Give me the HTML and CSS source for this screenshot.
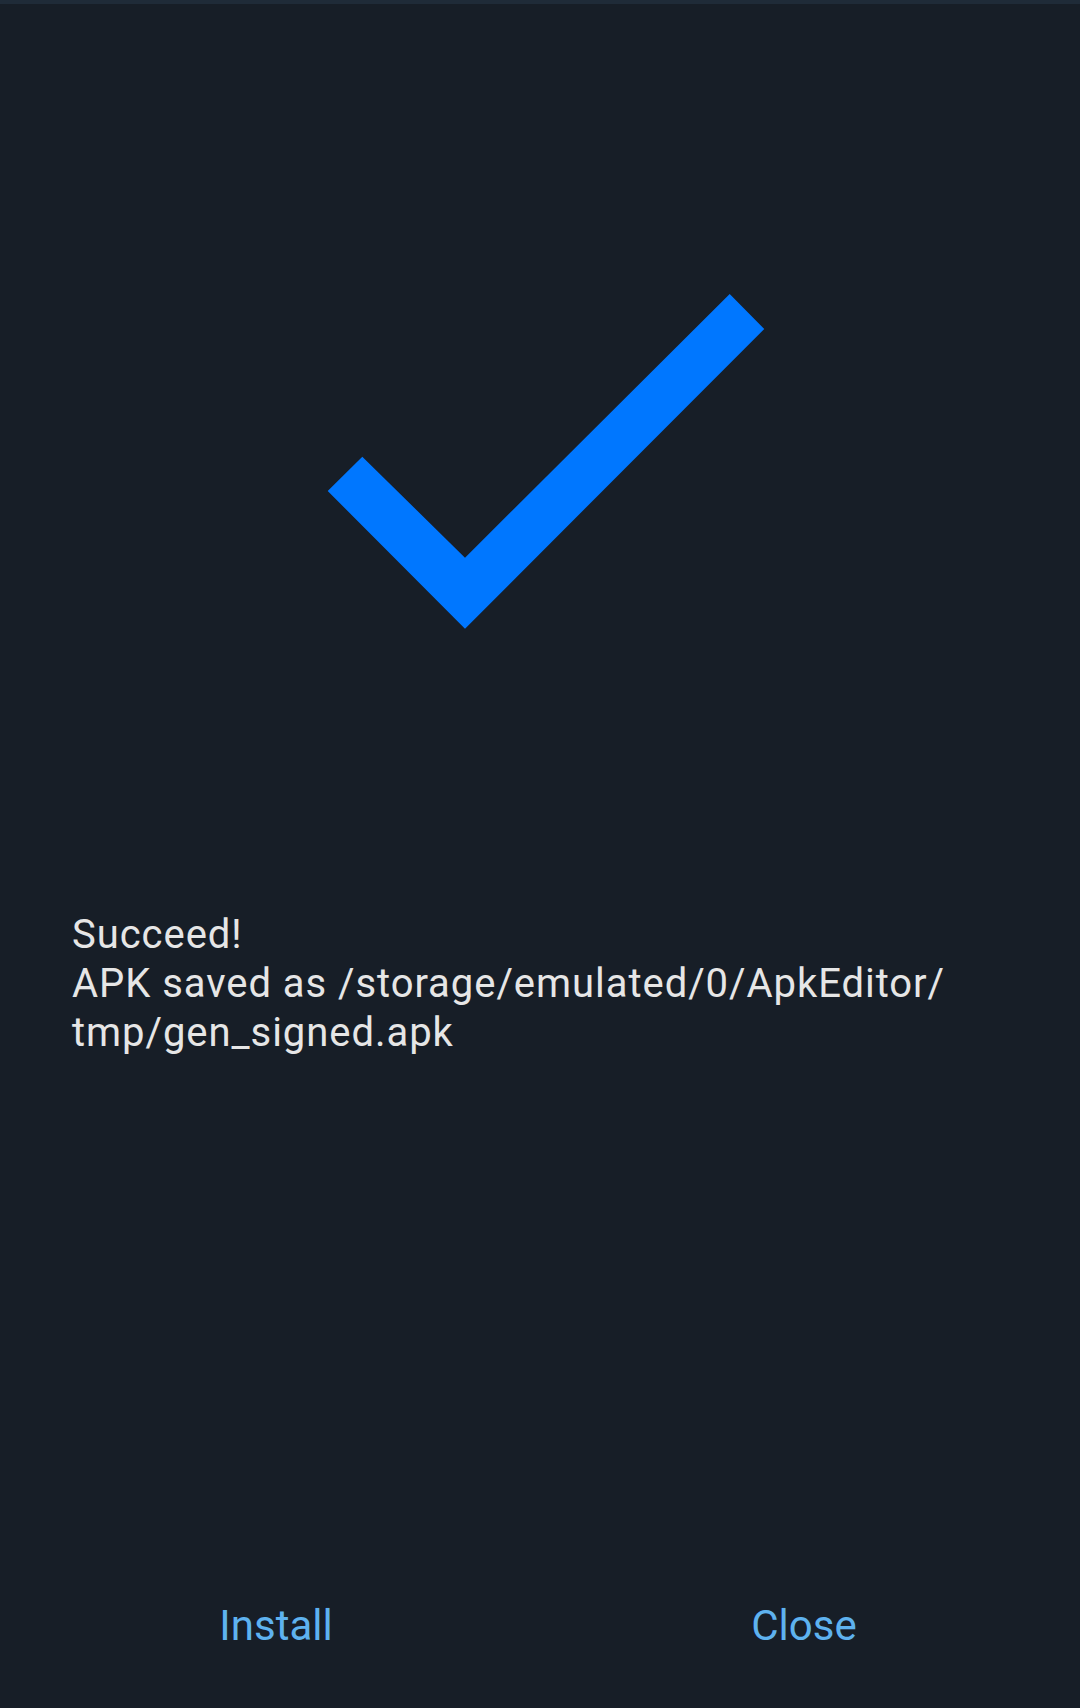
FILE: index.html
```html
<!DOCTYPE html>
<html>
<head>
<meta charset="utf-8">
<link rel="stylesheet" href="styles.css">
</head>
<body>
<div class="page">
  <div class="topbar"></div>
  <div class="hero">
    <svg class="check" width="1080" height="400" viewBox="0 260 1080 400">
      <polygon points="327.7,491 362.3,456.7 465,557.7 729.7,294 764.3,329 465,628.7" fill="#0077ff"/>
    </svg>
  </div>
  <div class="message">Succeed!<br>APK saved as /storage/emulated/0/ApkEditor/<br>tmp/gen_signed.apk</div>
  <div class="actions">
    <div class="btn">Install</div>
    <div class="btn">Close</div>
  </div>
</div>
</body>
</html>
```

FILE: styles.css
```css
html, body {
  margin: 0;
  padding: 0;
  background: #171e27;
}
.page {
  width: 1080px;
  height: 1708px;
  display: flex;
  flex-direction: column;
  font-family: Roboto, "Noto Sans", sans-serif;
}
.topbar {
  height: 4px;
  background: #1f2b38;
  flex: none;
}
.hero {
  margin-top: 256px;
  height: 400px;
  flex: none;
}
.check {
  display: block;
}
.message {
  margin-top: 250px;
  padding-left: 72px;
  font-size: 40px;
  line-height: 49px;
  letter-spacing: 0.95px;
  color: #e6e6e6;
}
.actions {
  margin-top: auto;
  display: flex;
  padding: 0 12px 57px;
}
.btn {
  flex: 1;
  text-align: center;
  font-size: 42px;
  line-height: 50px;
  color: #5eb2ef;
}
```
